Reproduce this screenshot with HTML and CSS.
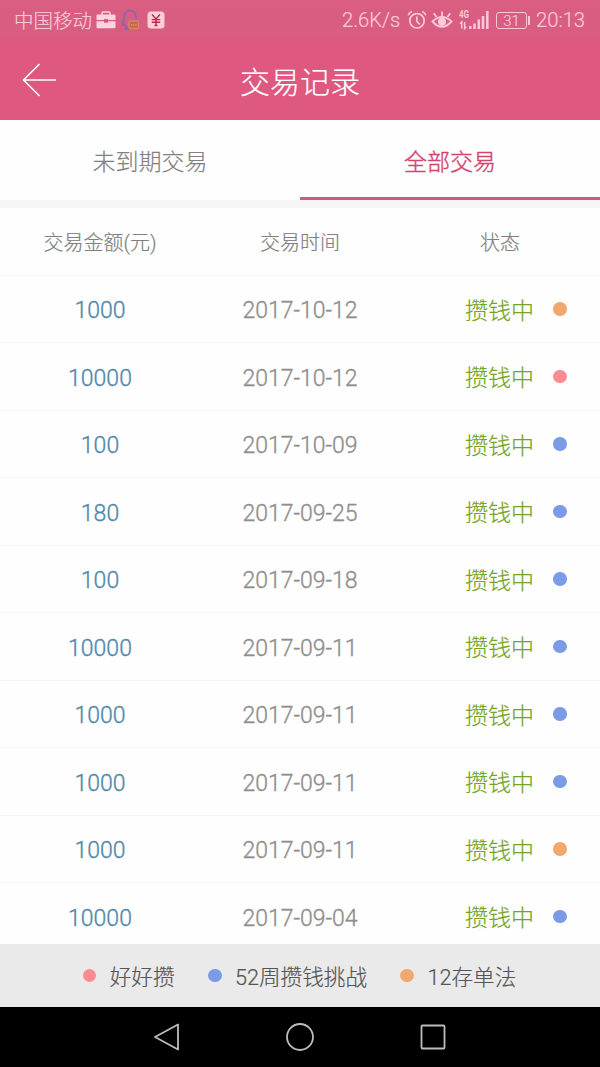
FILE: index.html
```html
<!DOCTYPE html>
<html lang="zh-CN">
<head>
    <meta charset="UTF-8">
    <meta name="viewport" content="width=device-width, initial-scale=1.0">
    <title>交易记录</title>
    <link rel="stylesheet" href="styles.css">
</head>
<body>
    <div class="top">
        <div class="status-bar">
            <span class="carrier">中国移动</span>
            <svg class="icon-case" width="20" height="18" viewBox="0 0 20 18">
                <path d="M6 4V2.2Q6 1 7.2 1h5.6Q14 1 14 2.2V4" fill="none" stroke="#fcd3df" stroke-width="1.5"/>
                <path d="M1.5 3.5h17q1 0 1 1V9H12V8H8v1H.5V4.500q0-1 1-1zM.5 10.200H8v1.500h4v-1.500h7.500v6q0 1-1 1h-17q-1 0-1-1z" fill="#fcd3df"/>
            </svg>
            <svg class="icon-chat" width="20" height="22" viewBox="0 0 20 22">
                <path d="M3 12C3 5 5 1.500 9 1.500S15 5 15.500 10M3.500 10C1.500 13 .8 15 1.500 16.500L3.500 15C4 17 5 18 6 18.500L4.500 20H9" fill="none" stroke="#8a62b0" stroke-width="1.400"/>
                <rect x="8" y="12" width="9.500" height="7.500" rx="1" fill="#c8645c" stroke="#d58a55" stroke-width="1.300"/>
                <path d="M10 15.800h1.200M12.200 15.800h1.200M14.400 15.800h1.200" stroke="#e3a45f" stroke-width="1.300"/>
            </svg>
            <svg class="icon-yen" width="18" height="18" viewBox="0 0 18 18">
                <rect x=".5" y=".5" width="17" height="17" rx="3.500" fill="#fccfd8"/>
                <path d="M5 3.500L9 8l4-4.500M9 8v7M4.800 8.600h8.400M4.800 11.200h8.400M7.500 14.500h3" fill="none" stroke="#bd2549" stroke-width="1.400"/>
            </svg>
            <span class="speed">2.6K/s</span>
            <svg class="icon-alarm" width="20" height="20" viewBox="0 0 20 20" fill="none" stroke="#fbc9d8" stroke-width="1.700">
                <circle cx="10" cy="10.800" r="7.200"/>
                <path d="M9.800 6.500v4.800l3 3M1.200 5.200Q2 2.500 5 1.500M18.800 5.200Q18 2.500 15 1.500"/>
            </svg>
            <svg class="icon-eye" width="22" height="20" viewBox="0 0 22 20" fill="none" stroke="#fbc9d8" stroke-width="1.900">
                <path d="M1.500 11.500Q11 2.500 20.500 11.500Q11 22 1.500 11.500z"/>
                <circle cx="11" cy="11.800" r="3.200" fill="#fbc9d8"/>
                <path d="M11 6V1.500M5.500 7L2.800 3.200M16.500 7l2.700-3.800"/>
            </svg>
            <div class="signal">
                <span class="net">4G</span>
                <svg width="32" height="20" viewBox="0 0 32 20">
                    <path d="M2.700 18.500v-6.500L1 13.800M5.600 12v6.500l1.700-1.800" fill="none" stroke="#fbc9d8" stroke-width="1.500"/>
                    <path d="M11.300 19v-3M15.500 19v-5.500M19.800 19V9.500M24 19V6M28.300 19V1" stroke="#fbc9d8" stroke-width="2.500"/>
                </svg>
            </div>
            <div class="battery"><span class="level">31</span></div>
            <span class="clock">20:13</span>
        </div>

        <div class="nav">
            <svg class="back" width="34" height="34" viewBox="0 0 34 34" fill="none" stroke="#fff" stroke-width="1.600">
                <path d="M17.500 1L1.500 17l16 16M1.500 17H34"/>
            </svg>
            <h1>交易记录</h1>
        </div>
    </div>

    <div class="tabs">
        <div class="tab">未到期交易</div>
        <div class="tab active">全部交易</div>
    </div>

    <div class="records">
        <div class="row head">
            <span>交易金额(元)</span><span>交易时间</span><span>状态</span>
        </div>
        <div class="row">
            <span class="amount">1000</span><span class="date">2017-10-12</span><span class="state">攒钱中<i class="dot orange"></i></span>
        </div>
        <div class="row">
            <span class="amount">10000</span><span class="date">2017-10-12</span><span class="state">攒钱中<i class="dot red"></i></span>
        </div>
        <div class="row">
            <span class="amount">100</span><span class="date">2017-10-09</span><span class="state">攒钱中<i class="dot blue"></i></span>
        </div>
        <div class="row">
            <span class="amount">180</span><span class="date">2017-09-25</span><span class="state">攒钱中<i class="dot blue"></i></span>
        </div>
        <div class="row">
            <span class="amount">100</span><span class="date">2017-09-18</span><span class="state">攒钱中<i class="dot blue"></i></span>
        </div>
        <div class="row">
            <span class="amount">10000</span><span class="date">2017-09-11</span><span class="state">攒钱中<i class="dot blue"></i></span>
        </div>
        <div class="row">
            <span class="amount">1000</span><span class="date">2017-09-11</span><span class="state">攒钱中<i class="dot blue"></i></span>
        </div>
        <div class="row">
            <span class="amount">1000</span><span class="date">2017-09-11</span><span class="state">攒钱中<i class="dot blue"></i></span>
        </div>
        <div class="row">
            <span class="amount">1000</span><span class="date">2017-09-11</span><span class="state">攒钱中<i class="dot orange"></i></span>
        </div>
        <div class="row">
            <span class="amount">10000</span><span class="date">2017-09-04</span><span class="state">攒钱中<i class="dot blue"></i></span>
        </div>
    </div>

    <div class="legend">
        <div class="legend-item"><i class="dot red"></i>好好攒</div>
        <div class="legend-item"><i class="dot blue"></i>52周攒钱挑战</div>
        <div class="legend-item"><i class="dot orange"></i>12存单法</div>
    </div>

    <div class="system-nav">
        <svg width="28" height="30" viewBox="0 0 28 30"><path d="M25 2.500v25L2 15z"/></svg>
        <svg width="28" height="30" viewBox="0 0 28 30"><circle cx="14" cy="15" r="13"/></svg>
        <svg width="28" height="30" viewBox="0 0 28 30"><rect x="2.500" y="3.500" width="23" height="23" rx="1"/></svg>
    </div>
</body>
</html>
```

FILE: styles.css
```css
* {
    margin: 0;
    padding: 0;
    box-sizing: border-box;
}

body {
    width: 600px;
    height: 1067px;
    display: flex;
    flex-direction: column;
    overflow: hidden;
    background: #fefefe;
    font-family: Roboto, 'Noto Sans CJK SC', sans-serif;
    font-weight: 300;
    -webkit-text-stroke: 0.2px currentColor;
}

.top {
    height: 120px;
    background: linear-gradient(#d85e82 0, #da5c81 36px, #de5880 44px);
    flex-shrink: 0;
}

/* status bar */
.status-bar {
    height: 40px;
    padding: 0 14px;
    display: flex;
    align-items: center;
    color: #fbc9d8;
    font-size: 20.2px;
    white-space: nowrap;
}

.carrier {
    width: 78px;
    margin-top: -1px;
    font-size: 19.5px;
}

.icon-case {
    margin-left: 4px;
}

.icon-chat {
    margin-left: 5px;
}

.icon-yen {
    margin-left: 6px;
}

.speed {
    width: 59px;
    margin-left: auto;
}

.icon-alarm {
    margin-left: 6px;
}

.icon-eye {
    margin-left: 4px;
}

.signal {
    position: relative;
    width: 32px;
    height: 20px;
    margin-left: 6px;
}

.signal svg {
    display: block;
}

.net {
    position: absolute;
    left: 0;
    top: 0;
    font-size: 10px;
    line-height: 10px;
    font-weight: 700;
    transform: scaleX(0.8);
    transform-origin: left;
    -webkit-text-stroke-width: 0;
}

.battery {
    width: 35px;
    height: 17px;
    margin-left: 5px;
    display: flex;
    align-items: center;
}

.level {
    width: 31px;
    height: 17px;
    border: 1px solid #fbc9d8;
    border-radius: 3px;
    font-size: 15px;
    line-height: 16px;
    text-align: center;
}

.battery::after {
    content: '';
    width: 2px;
    height: 9px;
    margin-left: 1px;
    background: #fbc9d8;
}

.clock {
    width: 50px;
    margin-left: 5px;
}

/* title bar */
.nav {
    height: 80px;
    display: grid;
    grid-template-columns: 56px 1fr 56px;
    align-items: center;
}

.back {
    margin-left: 22px;
}

.nav h1 {
    color: #fff;
    font-size: 30px;
    font-weight: 300;
    text-align: center;
}

/* tabs */
.tabs {
    height: 88px;
    display: flex;
    flex-shrink: 0;
    border-bottom: 8px solid #f5f5f5;
}

.tab {
    flex: 1;
    height: 80px;
    padding-top: 4px;
    color: #808080;
    font-size: 23px;
    line-height: 78px;
    text-align: center;
}

.tab.active {
    color: #d2446f;
    -webkit-text-stroke-width: 0.4px;
    border-bottom: 3px solid #d15a82;
}

/* records */
.records {
    flex: 1;
    min-height: 0;
    overflow: hidden;
}

.row {
    height: 67.5px;
    display: grid;
    grid-template-columns: repeat(3, 200px);
    align-items: center;
    border-bottom: 1px solid #f5f5f5;
    text-align: center;
    font-size: 23px;
}

.head {
    color: #808080;
    font-size: 20px;
}

.amount,
.date {
    padding-top: 4px;
    -webkit-text-stroke-width: 0.35px;
}

.amount {
    color: #5388ab;
}

.date {
    color: #8e8e8e;
}

.state {
    display: flex;
    align-items: center;
    padding-left: 65px;
    color: #74a422;
}

.dot {
    width: 13.5px;
    height: 13.5px;
    border-radius: 50%;
}

.state .dot {
    margin-left: 19px;
}

.red {
    background: #fc8c90;
}

.blue {
    background: #7b9be6;
}

.orange {
    background: #f1a86e;
}

/* legend */
.legend {
    height: 63px;
    padding-right: 1px;
    display: flex;
    justify-content: center;
    align-items: center;
    gap: 33.5px;
    flex-shrink: 0;
    background: #eaeaea;
    color: #555;
    font-size: 21.6px;
}

.legend-item {
    display: flex;
    align-items: center;
    gap: 13.5px;
}

/* android buttons */
.system-nav {
    height: 60px;
    display: flex;
    justify-content: center;
    align-items: center;
    gap: 105px;
    flex-shrink: 0;
    background: #000;
}

.system-nav svg {
    fill: none;
    stroke: #bdbdbd;
    stroke-width: 1.8;
    stroke-linejoin: round;
}
```
